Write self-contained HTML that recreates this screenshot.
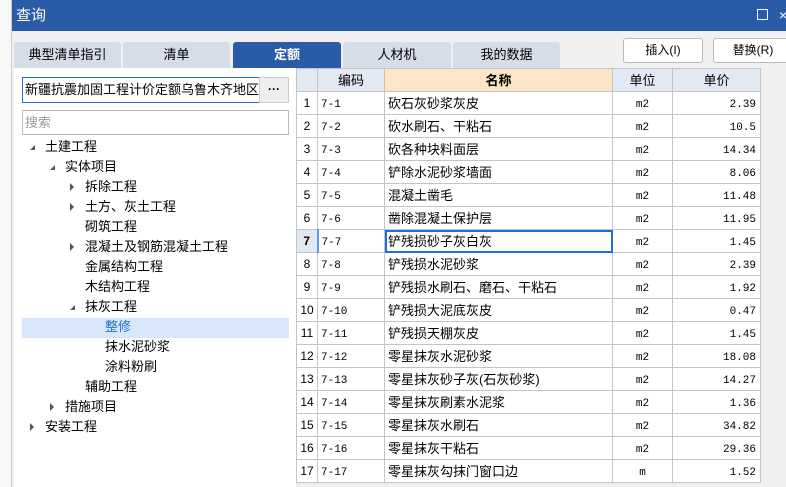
<!DOCTYPE html><html><head><meta charset="utf-8"><style>
*{margin:0;padding:0;box-sizing:border-box}
body{width:786px;height:487px;overflow:hidden;background:#f0f0f0;font-family:"Liberation Sans","Noto Sans CJK SC",sans-serif;font-size:12px;color:#000;position:relative}
.abs{position:absolute}
.title{left:12px;top:0;width:774px;height:31px;background:#2a5ba6;color:#fff;font-size:15px;line-height:31px;padding-left:4px}
.strip{left:0;top:0;width:12px;height:487px;background:#f7f7f7;border-right:1px solid #ccc}
.tab{top:42px;height:26px;line-height:25px;text-align:center;background:#d6dce8;font-size:13px;border-radius:3px 3px 0 0}
.btn{top:38px;height:25px;line-height:23px;text-align:center;background:#fff;border:1px solid #bbb;border-radius:3px;font-size:12px}
.panel{left:14px;top:68px;width:282px;height:419px;background:#fff}
.tr{position:absolute;height:20px;line-height:20px;font-size:13px}
.ar{position:absolute;width:0;height:0}
.r{border-left:4px solid #555;border-top:4px solid transparent;border-bottom:4px solid transparent}
.d{border-right:5px solid #555;border-top:5px solid transparent}
table{position:absolute;left:296px;top:68px;border-collapse:collapse;background:#fff;table-layout:fixed}
td,th{border:1px solid #c4c4c4;height:23px;line-height:21px;vertical-align:middle;white-space:nowrap;overflow:hidden}
td{padding:0 3px;font-size:13px}
th{font-weight:normal;background:#e3e9f2;font-size:13px}
td.n{text-align:center;background:#fff;padding:0;font-size:12px}
td.c,td.u,td.p{font-family:"Liberation Mono",monospace;font-size:11px;line-height:18px;padding-top:3px}
td.u{text-align:center}
td.p{text-align:right;padding-right:4px}
</style></head><body>
<div class="abs strip"></div>
<div class="abs title">查询<span style="position:absolute;left:745px;top:9px;width:11px;height:11px;border:1.5px solid #fff"></span><span style="position:absolute;left:767px;top:0;font-size:14px">×</span></div>
<div class="abs tab" style="left:14px;width:107px">典型清单指引</div>
<div class="abs tab" style="left:123px;width:107px">清单</div>
<div class="abs tab" style="left:233px;width:108px;background:#2a5ba6;color:#fff;font-weight:bold">定额</div>
<div class="abs tab" style="left:343px;width:108px">人材机</div>
<div class="abs tab" style="left:453px;width:107px">我的数据</div>
<div class="abs btn" style="left:623px;width:80px">插入(I)</div>
<div class="abs btn" style="left:713px;width:80px">替换(R)</div>
<div class="abs panel"></div>
<div class="abs" style="left:22px;top:77px;width:238px;height:26px;background:#fff;border:1px solid #1e6fd9;font-size:13px;line-height:24px;padding-left:2px;overflow:hidden;white-space:nowrap">新疆抗震加固工程计价定额乌鲁木齐地区单价</div>
<div class="abs" style="left:259px;top:77px;width:30px;height:26px;background:#eee;border:1px solid #ccc;text-align:center;line-height:22px;font-weight:bold">···</div>
<div class="abs" style="left:22px;top:110px;width:267px;height:25px;background:#fff;border:1px solid #bbb;color:#999;font-size:13px;line-height:23px;padding-left:2px">搜索</div>
<div class="abs" style="left:22px;top:318px;width:267px;height:20px;background:#d9e7fc"></div>
<div class="ar d" style="left:30px;top:145px"></div><div class="tr" style="left:45px;top:137px">土建工程</div>
<div class="ar d" style="left:50px;top:165px"></div><div class="tr" style="left:65px;top:157px">实体项目</div>
<div class="ar r" style="left:70px;top:183px"></div><div class="tr" style="left:85px;top:177px">拆除工程</div>
<div class="ar r" style="left:70px;top:203px"></div><div class="tr" style="left:85px;top:197px">土方、灰土工程</div>
<div class="tr" style="left:85px;top:217px">砌筑工程</div>
<div class="ar r" style="left:70px;top:243px"></div><div class="tr" style="left:85px;top:237px">混凝土及钢筋混凝土工程</div>
<div class="tr" style="left:85px;top:257px">金属结构工程</div>
<div class="tr" style="left:85px;top:277px">木结构工程</div>
<div class="ar d" style="left:70px;top:305px"></div><div class="tr" style="left:85px;top:297px">抹灰工程</div>
<div class="tr" style="left:105px;top:317px;color:#1e6fd9">整修</div>
<div class="tr" style="left:105px;top:337px">抹水泥砂浆</div>
<div class="tr" style="left:105px;top:357px">涂料粉刷</div>
<div class="tr" style="left:85px;top:377px">辅助工程</div>
<div class="ar r" style="left:50px;top:403px"></div><div class="tr" style="left:65px;top:397px">措施项目</div>
<div class="ar r" style="left:30px;top:423px"></div><div class="tr" style="left:45px;top:417px">安装工程</div>
<table>
<colgroup><col style="width:21px"><col style="width:67px"><col style="width:228px"><col style="width:60px"><col style="width:88px"></colgroup>
<tr><th></th><th>编码</th><th style="background:#fde6c8;font-weight:bold">名称</th><th>单位</th><th>单价</th></tr>
<tr><td class="n">1</td><td class="c">7-1</td><td>砍石灰砂浆灰皮</td><td class="u">m2</td><td class="p">2.39</td></tr>
<tr><td class="n">2</td><td class="c">7-2</td><td>砍水刷石、干粘石</td><td class="u">m2</td><td class="p">10.5</td></tr>
<tr><td class="n">3</td><td class="c">7-3</td><td>砍各种块料面层</td><td class="u">m2</td><td class="p">14.34</td></tr>
<tr><td class="n">4</td><td class="c">7-4</td><td>铲除水泥砂浆墙面</td><td class="u">m2</td><td class="p">8.06</td></tr>
<tr><td class="n">5</td><td class="c">7-5</td><td>混凝土凿毛</td><td class="u">m2</td><td class="p">11.48</td></tr>
<tr><td class="n">6</td><td class="c">7-6</td><td>凿除混凝土保护层</td><td class="u">m2</td><td class="p">11.95</td></tr>
<tr><td class="n" style="background:#e3e9f2;font-weight:bold;border-right:2px solid #5b9bf0">7</td><td class="c">7-7</td><td style="outline:2px solid #1e6fd9;outline-offset:-2px">铲残损砂子灰白灰</td><td class="u">m2</td><td class="p">1.45</td></tr>
<tr><td class="n">8</td><td class="c">7-8</td><td>铲残损水泥砂浆</td><td class="u">m2</td><td class="p">2.39</td></tr>
<tr><td class="n">9</td><td class="c">7-9</td><td>铲残损水刷石、磨石、干粘石</td><td class="u">m2</td><td class="p">1.92</td></tr>
<tr><td class="n">10</td><td class="c">7-10</td><td>铲残损大泥底灰皮</td><td class="u">m2</td><td class="p">0.47</td></tr>
<tr><td class="n">11</td><td class="c">7-11</td><td>铲残损天棚灰皮</td><td class="u">m2</td><td class="p">1.45</td></tr>
<tr><td class="n">12</td><td class="c">7-12</td><td>零星抹灰水泥砂浆</td><td class="u">m2</td><td class="p">18.08</td></tr>
<tr><td class="n">13</td><td class="c">7-13</td><td>零星抹灰砂子灰(石灰砂浆)</td><td class="u">m2</td><td class="p">14.27</td></tr>
<tr><td class="n">14</td><td class="c">7-14</td><td>零星抹灰刷素水泥浆</td><td class="u">m2</td><td class="p">1.36</td></tr>
<tr><td class="n">15</td><td class="c">7-15</td><td>零星抹灰水刷石</td><td class="u">m2</td><td class="p">34.82</td></tr>
<tr><td class="n">16</td><td class="c">7-16</td><td>零星抹灰干粘石</td><td class="u">m2</td><td class="p">29.36</td></tr>
<tr><td class="n">17</td><td class="c">7-17</td><td>零星抹灰勾抹门窗口边</td><td class="u">m</td><td class="p">1.52</td></tr>
</table>
</body></html>
